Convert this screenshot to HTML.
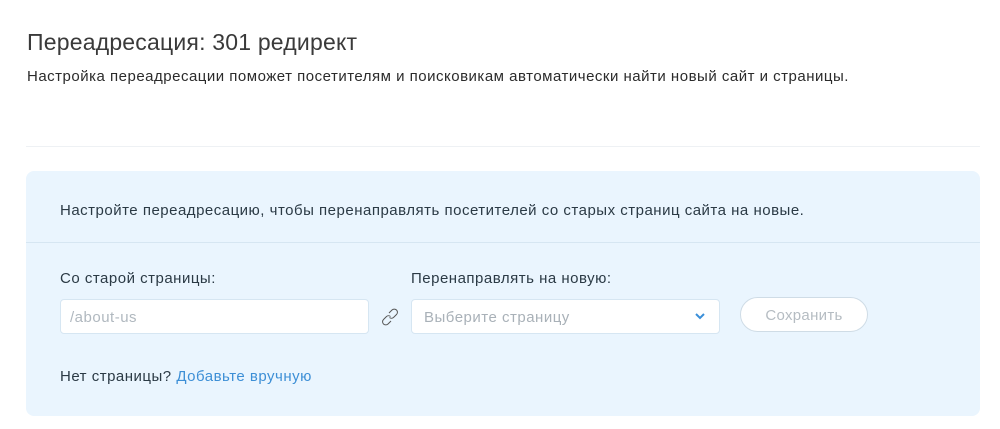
<!DOCTYPE html><html><head><meta charset="utf-8"><style>
body{margin:0;width:1000px;height:429px;background:#fff;font-family:"Liberation Sans",sans-serif;color:#20303c;position:relative;overflow:hidden}
.a{position:absolute;white-space:nowrap}
.t{font-size:15px;letter-spacing:0.5px}
</style></head><body>
<div class="a" style="left:27px;top:29px;font-size:23px;letter-spacing:0.2px;color:#3a3a3a">Переадресация: 301 редирект</div>
<div class="a t" style="left:27px;top:68px;color:#2b2b2b">Настройка переадресации поможет посетителям и поисковикам автоматически найти новый сайт и страницы.</div>
<div class="a" style="left:26px;top:146px;width:954px;height:1px;background:#eef1f4"></div>
<div class="a" style="left:26px;top:171px;width:954px;height:245px;background:#eaf5fe;border-radius:8px"></div>
<div class="a" style="left:26px;top:242px;width:954px;height:1px;background:#d6e6f2"></div>
<div class="a t" style="left:60px;top:202px;color:#2b3a45">Настройте переадресацию, чтобы перенаправлять посетителей со старых страниц сайта на новые.</div>
<div class="a t" style="left:60px;top:270px;color:#2b3a45">Со старой страницы:</div>
<div class="a t" style="left:411px;top:270px;color:#2b3a45">Перенаправлять на новую:</div>
<div class="a" style="left:60px;top:299px;width:307px;height:33px;background:#fff;border:1px solid #d6e6f2;border-radius:4px"></div>
<div class="a t" style="left:70px;top:309px;color:#b0b8bf">/about-us</div>
<svg class="a" style="left:379px;top:306px" width="22" height="22" viewBox="0 0 22 22" fill="none" stroke="#555" stroke-width="1"><path d="M10 7l3-3a3 3 0 0 1 4.5 4.5l-3 3a3 3 0 0 1-4 0"/><path d="M12 15l-3 3a3 3 0 0 1-4.5-4.5l3-3a3 3 0 0 1 4 0"/></svg>
<div class="a" style="left:411px;top:299px;width:307px;height:33px;background:#fff;border:1px solid #d6e6f2;border-radius:4px"></div>
<div class="a t" style="left:424px;top:309px;color:#a9b1b8">Выберите страницу</div>
<svg class="a" style="left:694px;top:311px" width="12" height="10" viewBox="0 0 12 10"><path d="M2 3l4 4 4-4" fill="none" stroke="#3b8fd9" stroke-width="2"/></svg>
<div class="a t" style="left:740px;top:297px;width:126px;height:33px;border:1px solid #cfdce6;border-radius:18px;background:#fff;text-align:center;line-height:35px;color:#b5bcc2;letter-spacing:0.3px">Сохранить</div>
<div class="a t" style="left:60px;top:368px;color:#2b3a45">Нет страницы? <span style="color:#3d8fd6">Добавьте вручную</span></div>
</body></html>
